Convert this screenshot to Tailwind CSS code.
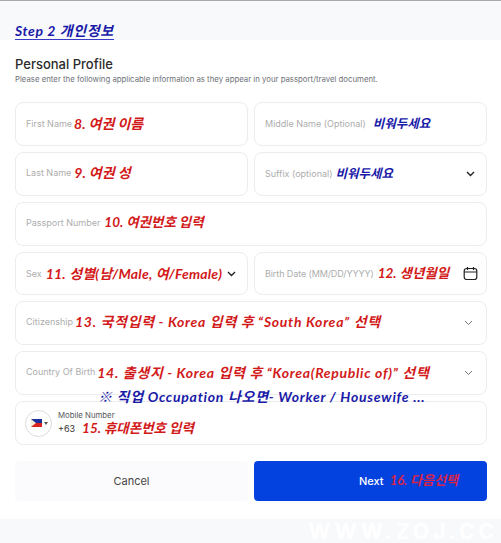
<!DOCTYPE html>
<html lang="en">
<head>
<meta charset="UTF-8">
<title>Personal Profile</title>
<script src="https://cdn.jsdelivr.net/npm/@tailwindcss/browser@4"></script>
</head>
<body class="w-[501px] h-[543px] overflow-hidden bg-white font-['Inter','Noto_Sans_CJK_KR',sans-serif]">

<!-- top strip -->
<div class="h-[40px] bg-[#f8f9fb] border-t border-[#a8a8a8] pl-[15px] pt-[21px]">
	<span class="block w-fit h-[18px] leading-[18px] border-b border-[#3a3ac8] text-[14px] font-bold italic tracking-[0.6px] text-[#1a1aa8] font-['Lato','Noto_Sans_CJK_KR',sans-serif]">Step 2 개인정보</span>
</div>

<main class="relative h-[479px] px-[15px] pt-[16px]">
	<h1 class="text-[13px] leading-[16px] font-medium text-[#2b2b2b]">Personal Profile</h1>
	<p class="mt-[1px] text-[7.8px] leading-[12px] text-[#6f7278]">Please enter the following applicable information as they appear in your passport/travel document.</p>

	<div class="mt-[17px] grid grid-cols-[233px_233px] gap-x-[6px] gap-y-[6px] text-[9px] text-[#adadad]">
		<div class="h-[44px] flex items-center rounded-lg border border-[#ececec] pl-[10px]">
			<span>First Name</span>
			<span class="ml-[2px] -mt-[1px] text-[14px] font-bold italic text-[#d21a1a] font-['Lato','Noto_Sans_CJK_KR',sans-serif]">8. 여권 이름</span>
		</div>
		<div class="h-[44px] flex items-center rounded-lg border border-[#ececec] pl-[10px]">
			<span>Middle Name (Optional)</span>
			<span class="ml-[7px] text-[12.5px] font-bold italic text-[#1a1aa8]">비워두세요</span>
		</div>

		<div class="h-[44px] flex items-center rounded-lg border border-[#ececec] pl-[10px]">
			<span class="-mt-[3px]">Last Name</span>
			<span class="ml-[3px] -mt-[3px] text-[14px] font-bold italic text-[#d21a1a] font-['Lato','Noto_Sans_CJK_KR',sans-serif]">9. 여권 성</span>
		</div>
		<div class="h-[44px] flex items-center rounded-lg border border-[#ececec] pl-[10px] pr-[11px]">
			<span>Suffix (optional)</span>
			<span class="ml-[3px] text-[12.5px] font-bold italic text-[#1a1aa8]">비워두세요</span>
			<svg class="ml-auto w-[9px] h-[6px]" viewBox="0 0 9 6" fill="none" stroke="#222" stroke-width="1.4"><path d="M1 1l3.5 3.5L8 1"/></svg>
		</div>

		<div class="col-span-2 h-[44px] flex items-center rounded-lg border border-[#ececec] pl-[10px]">
			<span class="-mt-[3px]">Passport Number</span>
			<span class="ml-[4px] -mt-[3px] text-[13.5px] font-bold italic text-[#d21a1a] font-['Lato','Noto_Sans_CJK_KR',sans-serif]">10. 여권번호 입력</span>
		</div>

		<div class="h-[43px] flex items-center rounded-lg border border-[#ececec] pl-[10px] pr-[11px]">
			<span>Sex</span>
			<span class="ml-[4px] text-[14px] tracking-[0.2px] whitespace-nowrap font-bold italic text-[#d21a1a] font-['Lato','Noto_Sans_CJK_KR',sans-serif]">11. 성별(남/Male, 여/Female)</span>
			<svg class="ml-auto w-[9px] h-[6px] shrink-0" viewBox="0 0 9 6" fill="none" stroke="#222" stroke-width="1.4"><path d="M1 1l3.5 3.5L8 1"/></svg>
		</div>
		<div class="h-[43px] flex items-center rounded-lg border border-[#ececec] pl-[10px] pr-[8px]">
			<span class="whitespace-nowrap tracking-[-0.1px]">Birth Date (MM/DD/YYYY)</span>
			<span class="ml-[4px] text-[13.5px] whitespace-nowrap font-bold italic text-[#d21a1a] font-['Lato','Noto_Sans_CJK_KR',sans-serif]">12. 생년월일</span>
			<svg class="ml-auto w-[15px] h-[15px] shrink-0" viewBox="0 0 15 15" fill="none" stroke="#222" stroke-width="1.2"><rect x="1.2" y="2.5" width="12.6" height="11" rx="2.5"/><path d="M1.2 6h12.6M4.5 1v3M10.5 1v3"/></svg>
		</div>

		<div class="col-span-2 h-[44px] flex items-center rounded-lg border border-[#ececec] pl-[10px] pr-[13px]">
			<span class="-mt-[3px]">Citizenship</span>
			<span class="ml-[2px] -mt-[3px] text-[14px] font-bold italic text-[#d21a1a] font-['Lato','Noto_Sans_CJK_KR',sans-serif] tracking-[0.7px]">13. 국적입력 - Korea 입력 후 “South Korea” 선택</span>
			<svg class="ml-auto w-[9px] h-[6px]" viewBox="0 0 9 6" fill="none" stroke="#777" stroke-width="1"><path d="M1 1l3.5 3.5L8 1"/></svg>
		</div>

		<div class="col-span-2 h-[44px] flex items-center rounded-lg border border-[#ececec] pl-[10px] pr-[13px]">
			<span class="-mt-[3px] whitespace-nowrap">Country Of Birth</span>
			<span class="ml-[2px] text-[14px] -mt-[1px] whitespace-nowrap font-bold italic text-[#d21a1a] font-['Lato','Noto_Sans_CJK_KR',sans-serif] tracking-[0.7px]">14. 출생지 - Korea 입력 후 “Korea(Republic of)” 선택</span>
			<svg class="ml-auto w-[9px] h-[6px] shrink-0" viewBox="0 0 9 6" fill="none" stroke="#777" stroke-width="1"><path d="M1 1l3.5 3.5L8 1"/></svg>
		</div>

		<div class="col-span-2 h-[44px] flex items-center rounded-lg border border-[#ececec] pl-[9px]">
			<div class="relative w-[27px] h-[27px] shrink-0 rounded-full border border-[#dcdcdc] flex items-center pl-[5px]">
				<svg class="w-[11px] h-[8px]" viewBox="0 0 11 8"><rect width="11" height="4" fill="#1c2f9c"/><rect y="4" width="11" height="4" fill="#d8231f"/><path d="M0 0l5 4-5 4z" fill="#f4f0d8"/></svg>
				<svg class="ml-[2px] w-[4px] h-[3px]" viewBox="0 0 4 3"><path d="M0 0h4L2 3z" fill="#555"/></svg>
			</div>
			<div class="ml-[6px] flex flex-col">
				<span class="text-[7.8px] leading-[11px] text-[#55585c]">Mobile Number</span>
				<div class="flex items-center h-[16px]">
					<span class="text-[9px] text-[#333]">+63</span>
					<span class="ml-[7px] text-[13.5px] font-bold italic whitespace-nowrap text-[#d21a1a] font-['Lato','Noto_Sans_CJK_KR',sans-serif]">15. 휴대폰번호 입력</span>
				</div>
			</div>
		</div>
	</div>

	<!-- annotation laid over the gap between the two rows -->
	<span class="absolute left-[98px] top-[348px] text-[14px] leading-[18px] whitespace-nowrap font-bold italic tracking-[0.75px] text-[#1a1aa8] font-['Lato','Noto_Sans_CJK_KR',sans-serif]">※ 직업 Occupation 나오면- Worker / Housewife ...</span>

	<div class="mt-[16px] grid grid-cols-[233px_233px] gap-x-[6px] text-[11px]">
		<button class="h-[40px] rounded-sm bg-[#fbfbfd] text-[#444]">Cancel</button>
		<button class="h-[40px] rounded-sm bg-[#0442e0] font-medium text-white flex items-center pl-[105px]">
			<span>Next</span>
			<span class="ml-[6px] text-[13px] font-bold italic text-[#d8244a] whitespace-nowrap font-['Lato','Noto_Sans_CJK_KR',sans-serif]">16. 다음선택</span>
		</button>
	</div>
</main>

<!-- bottom strip with the faded watermark -->
<div class="h-[24px] bg-[#f8f9fb] flex justify-end items-center overflow-hidden pr-[3px]">
	<span class="text-[21px] tracking-[4px] font-bold text-white leading-none">WWW.ZOJ.CC</span>
</div>

</body>
</html>
